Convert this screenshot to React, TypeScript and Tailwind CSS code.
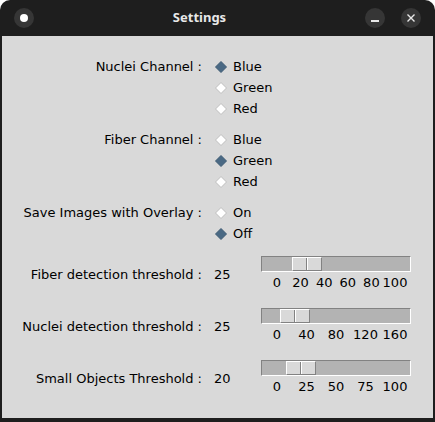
import React from "react";

const Diamond = ({ on }: { on: boolean }) => (
   <svg width="12" height="12" viewBox="0 0 12 12" className="shrink-0">
      <polygon
         points="6,0.5 11.5,6 6,11.5 0.5,6"
         fill={on ? "#4a6984" : "#ffffff"}
         stroke={on ? "#3d5a73" : "#bdbdbd"}
         strokeWidth="1"
      />
   </svg>
);

interface RadioGroupProps {
   label: string;
   options: string[];
   selected: string;
}

const RadioGroup = ({ label, options, selected }: RadioGroupProps) => (
   <div className="flex">
      <div className="w-[200px] h-[21px] leading-[21px] text-right">{label}</div>
      <div className="flex flex-col ml-[13px]">
         {options.map((opt) => (
            <div key={opt} className="flex items-center h-[21px]">
               <Diamond on={opt === selected} />
               <span className="ml-[6px] leading-[21px]">{opt}</span>
            </div>
         ))}
      </div>
   </div>
);

interface SliderRowProps {
   label: string;
   value: number;
   max: number;
   ticks: number[];
}

const SliderRow = ({ label, value, max, ticks }: SliderRowProps) => {
   // centre of a value, measured from the trough's left edge
   const pos = (v: number) => 16 + (v / max) * 118;
   return (
      <div className="flex items-center">
         <div className="w-[200px] text-right leading-[21px]">{label}</div>
         <div className="w-[47px] ml-[12px] leading-[21px]">{value}</div>
         <div className="w-[150px]">
            <div className="relative h-[16px] bg-[#b3b3b3] border border-t-[#828282] border-l-[#828282] border-r-white border-b-white">
               <div
                  className="absolute top-0 h-[14px] w-[30px] bg-[#d9d9d9] border border-t-white border-l-white border-r-[#828282] border-b-[#828282]"
                  style={{ left: pos(value) - 16 }}
               >
                  <div className="absolute top-0 bottom-0 left-[13px] w-px bg-[#828282]" />
                  <div className="absolute top-0 bottom-0 left-[14px] w-px bg-white" />
               </div>
            </div>
            <div className="relative h-[18px] mt-[2px] text-[13px] leading-[18px]">
               {ticks.map((t) => (
                  <span
                     key={t}
                     className="absolute top-0 -translate-x-1/2"
                     style={{ left: pos(t) }}
                  >
                     {t}
                  </span>
               ))}
            </div>
         </div>
      </div>
   );
};

const App = () => {
   return (
      <div className="w-[435px] h-[422px] bg-white font-['DejaVu_Sans',sans-serif]">
         <div className="h-full flex flex-col bg-[#1e1e1e] rounded-t-[10px] overflow-hidden">
            <div className="h-[36px] flex items-center px-[14px] shrink-0">
               <div className="w-[20px] h-[20px] rounded-full bg-[#363636] flex items-center justify-center">
                  <div className="w-[8px] h-[8px] rounded-full bg-white" />
               </div>
               <div className="flex-1 text-center text-[#e8e8e8] text-[13px] font-bold font-['Noto_Sans',sans-serif]">
                  Settings
               </div>
               <div className="w-[20px] h-[20px] rounded-full bg-[#363636] flex items-center justify-center">
                  <div className="w-[8px] h-[2px] bg-[#e8e8e8] mt-[5px]" />
               </div>
               <div className="w-[20px] h-[20px] rounded-full bg-[#363636] flex items-center justify-center ml-[16px]">
                  <svg width="10" height="10" viewBox="0 0 10 10">
                     <path d="M1.5 1.5 L8.5 8.5 M8.5 1.5 L1.5 8.5" stroke="#e8e8e8" strokeWidth="1.4" />
                  </svg>
               </div>
            </div>
            <div className="flex-1 bg-[#d9d9d9] mx-[2px] mb-[4px] text-[13px] text-black pt-[20px]">
               <RadioGroup label="Nuclei Channel :" options={["Blue", "Green", "Red"]} selected="Blue" />
               <div className="mt-[10px]">
                  <RadioGroup label="Fiber Channel :" options={["Blue", "Green", "Red"]} selected="Green" />
               </div>
               <div className="mt-[10px]">
                  <RadioGroup label="Save Images with Overlay :" options={["On", "Off"]} selected="Off" />
               </div>
               <div className="mt-[12px]">
                  <SliderRow label="Fiber detection threshold :" value={25} max={100} ticks={[0, 20, 40, 60, 80, 100]} />
               </div>
               <div className="mt-[16px]">
                  <SliderRow label="Nuclei detection threshold :" value={25} max={160} ticks={[0, 40, 80, 120, 160]} />
               </div>
               <div className="mt-[16px]">
                  <SliderRow label="Small Objects Threshold :" value={20} max={100} ticks={[0, 25, 50, 75, 100]} />
               </div>
            </div>
         </div>
      </div>
   );
};

export default App;
